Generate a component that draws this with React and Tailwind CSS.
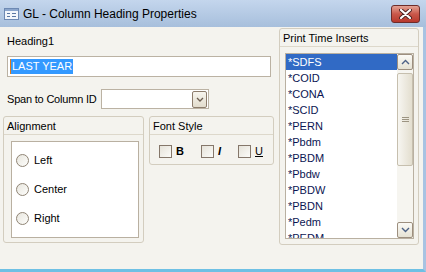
import React from "react";

const items = ["*SDFS", "*COID", "*CONA", "*SCID", "*PERN", "*Pbdm", "*PBDM", "*Pbdw", "*PBDW", "*PBDN", "*Pedm", "*PEDM"];

const Chevron = ({ up }) => (
  <svg width="9" height="6" viewBox="0 0 9 6">
    <path d={up ? "M1 5 L4.5 1.5 L8 5" : "M1 1 L4.5 4.5 L8 1"} fill="none" stroke="#4d6185" strokeWidth="1.4" />
  </svg>
);

const ScrollBtn = ({ up }) => (
  <div className="flex h-[16px] w-[16px] items-center justify-center rounded-[2px] border border-[#9d8f7f] bg-gradient-to-b from-[#fbfaf6] to-[#e6e2d4]">
    <Chevron up={up} />
  </div>
);

const Radio = ({ label }) => (
  <div className="flex items-center gap-[5px]">
    <span className="h-[13px] w-[13px] rounded-full border border-[#8f8474] bg-gradient-to-br from-[#e8e6de] to-[#fdfdfb]" />
    <span>{label}</span>
  </div>
);

const Check = ({ children }) => (
  <div className="flex items-center gap-[4px]">
    <span className="h-[13px] w-[13px] border border-[#85776a] bg-gradient-to-br from-[#e6e3da] to-[#fbfbf8]" />
    {children}
  </div>
);

const GroupHead = ({ children }) => (
  <div className="h-[18px] border-b border-[#ddd8cb] pl-[3px] leading-[18px]">{children}</div>
);

export default function App() {
  return (
    <div
      className="flex h-[272px] w-[426px] flex-col overflow-hidden text-[11px] text-black"
      style={{ fontFamily: '"Liberation Sans", Arial, sans-serif' }}
    >
      <div className="flex h-[27px] items-center bg-gradient-to-b from-[#c4d6ed] to-[#a7bfdc] pl-[4px] pr-[6px]">
        <svg width="15" height="12" viewBox="0 0 15 12">
          <rect x="0.5" y="0.5" width="14" height="11" fill="#f2f6fb" stroke="#6d89b3" />
          <rect x="1" y="1" width="13" height="2" fill="#8aa5cc" />
          <rect x="3" y="5" width="3" height="1" fill="#5a77a3" />
          <rect x="3" y="8" width="3" height="1" fill="#5a77a3" />
          <rect x="8" y="5" width="4" height="1" fill="#5a77a3" />
          <rect x="8" y="8" width="4" height="1" fill="#5a77a3" />
        </svg>
        <span className="ml-[4px] text-[12px] text-black">GL - Column Heading Properties</span>
        <div className="ml-auto flex h-[18px] w-[29px] items-center justify-center rounded-[3px] border border-[#6d2c2a] bg-gradient-to-b from-[#e2a295] via-[#c9574a] to-[#b8382c]">
          <svg width="13" height="10" viewBox="0 0 13 10">
            <path d="M2 1 L11 9 M11 1 L2 9" stroke="#4a2020" strokeWidth="4" strokeLinecap="round" />
            <path d="M2 1 L11 9 M11 1 L2 9" stroke="#ffffff" strokeWidth="2.2" strokeLinecap="round" />
          </svg>
        </div>
      </div>

      <div className="flex flex-1 border-b-[3px] border-r-[3px] border-b-[#6ec0e4] border-r-[#a8c3e2] bg-[#f4f3ee]">
        <div className="flex w-[274px] flex-col pl-[3px] pt-[8px]">
          <div className="ml-[4px] h-[13px] leading-[13px]">Heading1</div>
          <div className="ml-[4px] mt-[8px] flex h-[21px] w-[264px] items-center border border-[#bbb2a3] bg-white pl-[2px]">
            <span className="h-[15px] w-[1px] bg-[#e07a1a]" />
            <span className="bg-[#3399ff] px-[1px] leading-[15px] text-white">LAST YEAR</span>
          </div>
          <div className="ml-[4px] mt-[12px] flex items-center">
            <span className="w-[94px] tracking-[-0.2px]">Span to Column ID</span>
            <div className="flex h-[20px] w-[108px] items-center justify-end border border-[#bbb2a3] bg-white pr-[1px]">
              <div className="flex h-[17px] w-[15px] items-center justify-center rounded-[2px] border border-[#8d7d6d] bg-gradient-to-b from-[#f7f5ee] to-[#e2dccd]">
                <svg width="8" height="5" viewBox="0 0 8 5">
                  <path d="M1 1 L4 4 L7 1" fill="none" stroke="#6b5d50" strokeWidth="1.3" />
                </svg>
              </div>
            </div>
          </div>
          <div className="mt-[7px] flex items-start gap-[5px]">
            <div className="flex h-[127px] w-[141px] flex-col rounded-[3px] border border-[#d3cdbf]">
              <GroupHead>Alignment</GroupHead>
              <div className="ml-[7px] mt-[6px] flex h-[97px] w-[128px] flex-col justify-around border border-[#b9b0a1] bg-white py-[4px] pl-[4px]">
                <Radio label="Left" />
                <Radio label="Center" />
                <Radio label="Right" />
              </div>
            </div>
            <div className="flex h-[49px] w-[125px] flex-col rounded-[3px] border border-[#d3cdbf]">
              <GroupHead>Font Style</GroupHead>
              <div className="mt-[8px] flex items-center gap-[17px] pl-[9px]">
                <Check><span className="font-bold">B</span></Check>
                <Check><span className="font-bold italic">I</span></Check>
                <Check><span className="underline">U</span></Check>
              </div>
            </div>
          </div>
        </div>

        <div className="ml-[5px] mt-[1px] flex h-[217px] w-[140px] flex-col rounded-[3px] border border-[#d3cdbf]">
          <GroupHead>Print Time Inserts</GroupHead>
          <div className="ml-[5px] mt-[6px] flex h-[186px] w-[129px] border border-[#b9b0a1] bg-white">
            <div className="flex flex-1 flex-col overflow-hidden">
              {items.map((t, i) => (
                <div
                  key={t}
                  className={
                    i === 0
                      ? "h-[16px] shrink-0 bg-[#316ac5] pl-[2px] leading-[16px] text-white"
                      : "h-[16px] shrink-0 pl-[2px] leading-[16px] text-[#0b1552]"
                  }
                >
                  {t}
                </div>
              ))}
            </div>
            <div className="flex w-[16px] flex-col bg-[#f6f5f0]">
              <ScrollBtn up />
              <div className="mt-[3px] flex h-[93px] items-center justify-center rounded-[2px] border border-[#c6bfae] bg-gradient-to-r from-[#f7f6f1] to-[#e3decf]">
                <svg width="7" height="5" viewBox="0 0 7 5">
                  <path d="M0 0.5 H7 M0 2.5 H7 M0 4.5 H7" stroke="#9c9482" strokeWidth="1" />
                </svg>
              </div>
              <div className="flex-1" />
              <ScrollBtn />
            </div>
          </div>
        </div>
      </div>
    </div>
  );
}
